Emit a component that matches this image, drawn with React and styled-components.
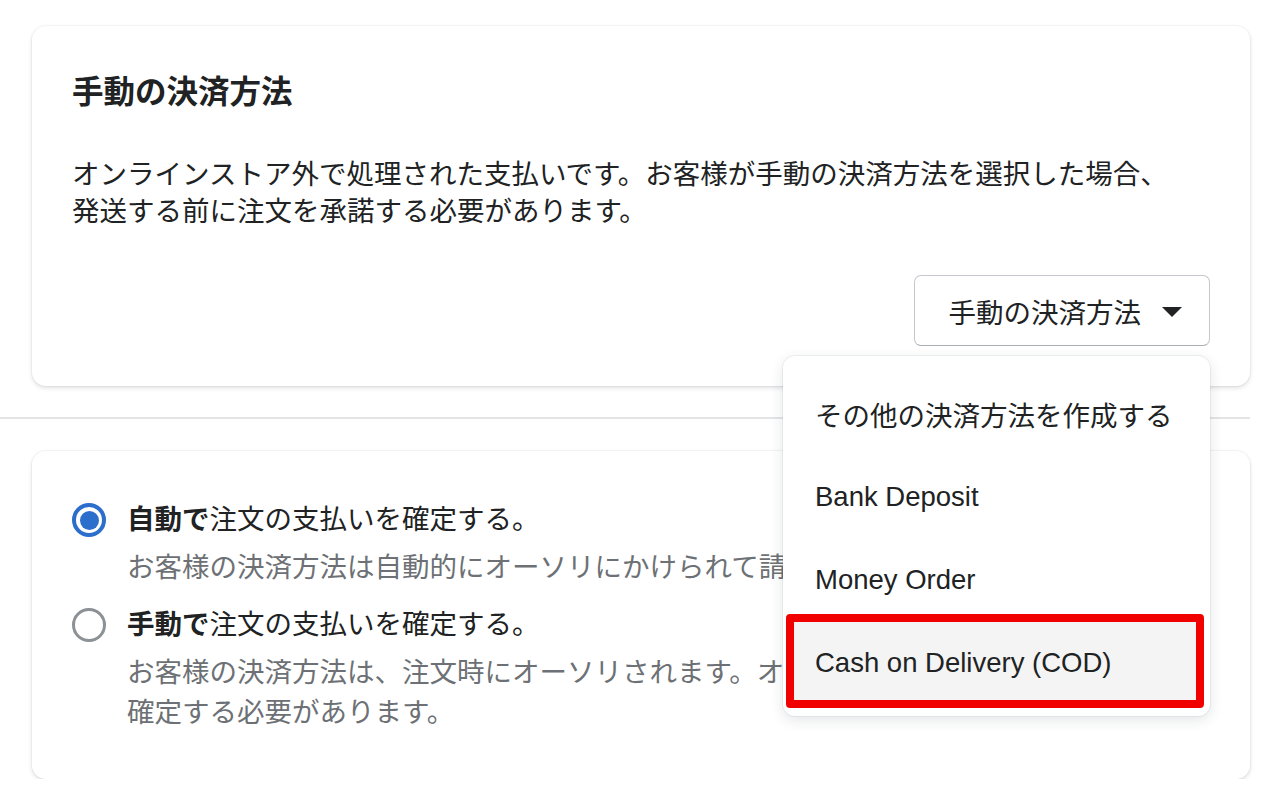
import React from "react";
import styled, { createGlobalStyle } from "styled-components";

const GlobalStyle = createGlobalStyle`
  html, body {
    margin: 0;
    padding: 0;
    background: #ffffff;
  }
  body {
    font-family: "Liberation Sans", "Noto Sans CJK JP", sans-serif;
    color: #202223;
    -webkit-font-smoothing: antialiased;
  }
`;

const Page = styled.div`
  width: 1250px;
  padding-top: 26px;
  display: flex;
  flex-direction: column;
`;

const Card = styled.section`
  margin-left: 32px;
  background: #ffffff;
  border-radius: 14px;
  box-shadow: 0 0 0 1px rgba(63, 63, 68, 0.04), 0 2px 4px rgba(63, 63, 68, 0.16);
  padding: ${(props) => props.pad};
  position: relative;
  z-index: ${(props) => props.layer || 1};
`;

const Title = styled.h2`
  margin: 0;
  font-size: 31.5px;
  line-height: 40px;
  font-weight: 700;
  color: #202223;
`;

const Text = styled.p`
  margin: 44px 0 0;
  font-size: 27.5px;
  line-height: 37px;
  color: #202223;
`;

const Actions = styled.div`
  margin-top: 45px;
  display: flex;
  justify-content: flex-end;
  position: relative;
`;

const Button = styled.button`
  height: 71px;
  box-sizing: border-box;
  display: flex;
  align-items: center;
  gap: 21px;
  padding: 0 27px 0 34px;
  background: #ffffff;
  border: 1.5px solid #c4c8cc;
  border-bottom-color: #a9aeb3;
  border-radius: 7px;
  font-family: inherit;
  font-size: 27.5px;
  color: #202223;
  cursor: pointer;
`;

const Caret = styled.span`
  width: 0;
  height: 0;
  border-left: 10px solid transparent;
  border-right: 10px solid transparent;
  border-top: 10px solid #202223;
  margin-top: 2px;
`;

const Menu = styled.ul`
  position: absolute;
  top: 81px;
  right: 0;
  width: 427px;
  box-sizing: border-box;
  margin: 0;
  padding: 16px 0 12px;
  list-style: none;
  background: #ffffff;
  border-radius: 12px;
  box-shadow: 0 0 0 1px rgba(6, 44, 82, 0.06), 0 4px 14px rgba(33, 43, 54, 0.12);
  z-index: 10;
`;

const MenuItem = styled.li`
  height: 83px;
  display: flex;
  align-items: center;
  padding: 0 16px 0 29px;
  margin: 0 6px 0 3px;
  font-size: 27.5px;
  white-space: nowrap;
  color: #202223;
  background: ${(props) => (props.active ? "#f4f4f5" : "transparent")};
  border-radius: 4px;
`;

const Highlight = styled.div`
  position: absolute;
  left: 3px;
  top: 258px;
  width: 418px;
  height: 94px;
  box-sizing: border-box;
  border: 8px solid #f10000;
  border-radius: 4px;
  pointer-events: none;
`;

const Divider = styled.hr`
  margin: 31px 0 32px;
  border: none;
  height: 2px;
  background: #e3e4e6;
`;

const Option = styled.label`
  display: grid;
  grid-template-columns: 36px 1fr;
  column-gap: 19px;
  align-items: start;
  & + & {
    margin-top: 17px;
  }
`;

const Radio = styled.span`
  width: 34px;
  height: 34px;
  margin-top: 3px;
  box-sizing: border-box;
  border-radius: 50%;
  border: ${(props) => (props.checked ? "4.5px solid #2c6ecb" : "3.5px solid #8c9196")};
  display: flex;
  align-items: center;
  justify-content: center;
  &::after {
    content: "";
    width: 19px;
    height: 19px;
    border-radius: 50%;
    background: ${(props) => (props.checked ? "#2c6ecb" : "transparent")};
  }
`;

const OptionLabel = styled.div`
  font-size: 27.5px;
  line-height: 40px;
  color: #202223;
  b {
    font-weight: 700;
  }
`;

const OptionHelp = styled.div`
  margin-top: 8px;
  font-size: 27.5px;
  line-height: 40px;
  color: #6d7175;
`;

const paymentMethods = [
  "その他の決済方法を作成する",
  "Bank Deposit",
  "Money Order",
  "Cash on Delivery (COD)",
];

export default function App() {
  return (
    <>
      <GlobalStyle />
      <Page>
        <Card pad="46px 40px 40px" layer={2}>
          <Title>手動の決済方法</Title>
          <Text>
            オンラインストア外で処理された支払いです。お客様が手動の決済方法を選択した場合、
            <br />
            発送する前に注文を承諾する必要があります。
          </Text>
          <Actions>
            <Button type="button">
              手動の決済方法
              <Caret />
            </Button>
            <Menu>
              {paymentMethods.map((m, i) => (
                <MenuItem key={m} active={i === paymentMethods.length - 1}>
                  {m}
                </MenuItem>
              ))}
              <Highlight />
            </Menu>
          </Actions>
        </Card>
        <Divider />
        <Card pad="49px 40px 46px 40px">
          <Option>
            <Radio checked />
            <div>
              <OptionLabel>
                <b>自動で</b>注文の支払いを確定する。
              </OptionLabel>
              <OptionHelp>
                お客様の決済方法は自動的にオーソリにかけられて請求されます。
              </OptionHelp>
            </div>
          </Option>
          <Option>
            <Radio />
            <div>
              <OptionLabel>
                <b>手動で</b>注文の支払いを確定する。
              </OptionLabel>
              <OptionHelp>
                お客様の決済方法は、注文時にオーソリされます。オーソリ期限が切れる前に支払いを確定する必要があります。
              </OptionHelp>
            </div>
          </Option>
        </Card>
      </Page>
    </>
  );
}
